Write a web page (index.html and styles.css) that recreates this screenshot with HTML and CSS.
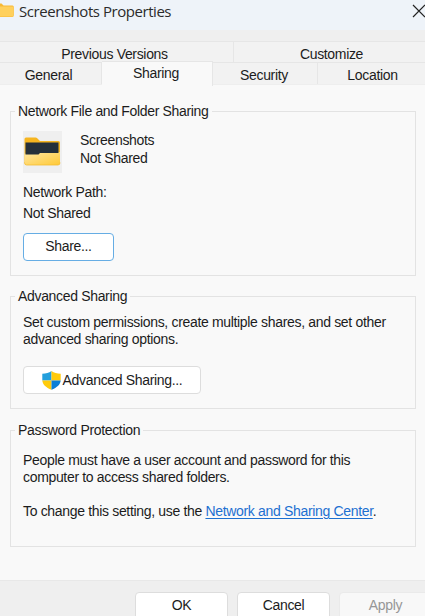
FILE: index.html
```
<!DOCTYPE html>
<html lang="en">
<head>
<meta charset="utf-8">
<title>Screenshots Properties</title>
<link rel="stylesheet" href="styles.css">
</head>
<body>
<div class="dialog">
  <header class="titlebar">
    <svg class="title-icon" width="14" height="18" viewBox="0 0 14 18">
      <path d="M0 2.500h1.500l2 2H12.500q1.300 0 1.300 1.500V14q0 2-1.500 2H0z" fill="#f7b934"/>
      <path d="M0 5.500h12.500q1 0 1 1v8q0 1-1 1H0z" fill="#ffd05c"/>
    </svg>
    <h1 class="title">Screenshots Properties</h1>
    <svg class="close" width="14" height="14" viewBox="0 0 14 14"><path d="M1 1l12 12M13 1L1 13" stroke="#222" stroke-width="1.200" fill="none"/></svg>
  </header>
  <nav class="tabs">
    <div class="tab-row upper">
      <span class="tab previous">Previous Versions</span>
      <span class="tab customize">Customize</span>
    </div>
    <div class="tab-row lower">
      <span class="tab general">General</span>
      <span class="tab sharing">Sharing</span>
      <span class="tab security">Security</span>
      <span class="tab location">Location</span>
    </div>
  </nav>
  <main class="panel">
    <fieldset class="group network">
      <legend>Network File and Folder Sharing</legend>
      <div class="folder-row">
        <span class="folder-box">
          <svg width="39" height="42" viewBox="0 0 39 42">
            <defs><linearGradient id="fold" x1="0" y1="0" x2="1" y2="1"><stop offset="0" stop-color="#ffe7a2"/><stop offset="1" stop-color="#ffc936"/></linearGradient></defs>
            <path d="M3 6.500H12.500q1 0 2 1l2.500 2.500H35.500q1.500 0 1.500 1.500V32H1.500V8q0-1.500 1.500-1.500z" fill="#f6b520"/>
            <path d="M1.500 22.500H15.500l1-1.500H37V32q0 2-2 2H3.500q-2 0-2-2z" fill="url(#fold)"/>
            <path d="M2.500 11.500H35.500V22H17l-1.500 1.500H2.500z" fill="#25303a"/>
            <path d="M1.500 31.500q0 2.500 2 2.500H35q2 0 2-2.500" fill="none" stroke="#f5bd32" stroke-width=".8"/>
          </svg>
        </span>
        <div class="folder-text"><div>Screenshots</div><div>Not Shared</div></div>
      </div>
      <p class="path">Network Path:<br>Not Shared</p>
      <button class="button share">Share...</button>
    </fieldset>
    <fieldset class="group advanced">
      <legend>Advanced Sharing</legend>
      <p class="copy">Set custom permissions, create multiple shares, and set other<br>advanced sharing options.</p>
      <button class="button adv">
        <svg width="19" height="19" viewBox="0 0 19 19">
          <defs><clipPath id="shield"><path d="M9.500 0C7 2 4 2.700.300 2.700V9C.300 13.500 4 16.500 9.500 18.800C15 16.500 18.700 13.500 18.700 9V2.700C15 2.700 12 2 9.500 0z"/></clipPath></defs>
          <g clip-path="url(#shield)"><path d="M0 0h9.500v9.500H0z" fill="#249fdc"/><path d="M9.500 0H19v9.500H9.500zM0 9.500h9.500V19H0z" fill="#ffcb0c"/><path d="M9.500 9.500H19V19H9.500z" fill="#0b7fd6"/></g>
        </svg>
        <span>Advanced Sharing...</span>
      </button>
    </fieldset>
    <fieldset class="group password">
      <legend>Password Protection</legend>
      <p class="copy">People must have a user account and password for this<br>computer to access shared folders.</p>
      <p class="copy change">To change this setting, use the <a class="link">Network and Sharing Center</a>.</p>
    </fieldset>
  </main>
  <footer class="actions">
    <button class="button">OK</button>
    <button class="button">Cancel</button>
    <button class="button disabled">Apply</button>
  </footer>
</div>
</body>
</html>
```
FILE: styles.css
```
* { box-sizing: border-box; }
body { margin: 0; font: 14px/17px "Liberation Sans", Arial, sans-serif; letter-spacing: -.33px; color: #1c1c1c; }
.dialog { width: 425px; height: 616px; overflow: hidden; display: flex; flex-direction: column; background: #efefef; white-space: nowrap; }
.titlebar { height: 30px; flex: none; display: flex; background: #eef3f9; }
.title-icon { flex: none; margin-top: 1px; }
.title { margin: 1px 0 0 5px; font: 15px/20px "Open Sans", sans-serif; letter-spacing: -.45px; color: #2b2b2b; flex: 1; }
.close { flex: none; margin: 4px -1px 0 0; }
.tabs { flex: none; padding-top: 11px; }
.tab-row { display: flex; }
.tab { flex: none; border-top: 1px solid #e6e6e6; border-right: 1px solid #e6e6e6; background: #f2f2f2; text-align: center; }
.upper .tab { height: 21px; padding-top: 4px; }
.lower .tab { height: 22px; padding-top: 4px; }
.previous { width: 234px; padding-right: 4px; }
.customize { width: 194px; padding-left: 2px; }
.general { width: 102px; padding-right: 4px; }
.tab-row .sharing { width: 111px; height: 25px; margin: -1px 0 -2px; padding: 3px 2px 0 0; background: #f9f9f9; position: relative; }
.security { width: 105px; padding-right: 2px; }
.location { width: 110px; }
.panel { flex: none; height: 496px; background: #f9f9f9; border-top: 1px solid #eee; padding: 18px 9px 0 10px; }
.group { margin: 0; border: 1px solid #e3e3e3; padding: 0 0 0 12px; min-width: 0; }
.group legend { margin-left: -8px; padding: 0 3px; height: 17px; }
.network { height: 173px; }
.advanced { height: 121px; margin-top: 12px; }
.password { height: 125px; margin-top: 13px; }
.folder-row { display: flex; margin-top: 11px; }
.folder-box { width: 39px; height: 42px; background: #efefef; }
.folder-text { margin-left: 18px; line-height: 18px; }
.path { margin: 9px 0 0; line-height: 21px; }
.button { font: inherit; letter-spacing: inherit; color: inherit; height: 28px; border: 1px solid #ddd; border-radius: 4px; background: #fff; padding: 0 0 2px; display: flex; align-items: center; justify-content: center; }
.share { width: 91px; margin-top: 9px; border-color: #66ade4; }
.copy { margin: 9px 0 0; }
.adv { width: 178px; margin-top: 18px; padding-bottom: 0; }
.adv span { margin-left: 2px; }
.password .copy { margin-top: 13px; }
.password .change { margin-top: 17px; }
.link { color: #1d70d1; text-decoration: underline; text-underline-offset: 2px; }
.actions { flex: 1; display: flex; gap: 9px; padding: 11px 0 0 135px; border-top: 1px solid #e8e8e8; }
.actions .button { width: 93px; flex: none; }
.actions .disabled { color: #969696; background: #f8f8f8; border-color: #eaeaea; }
```
